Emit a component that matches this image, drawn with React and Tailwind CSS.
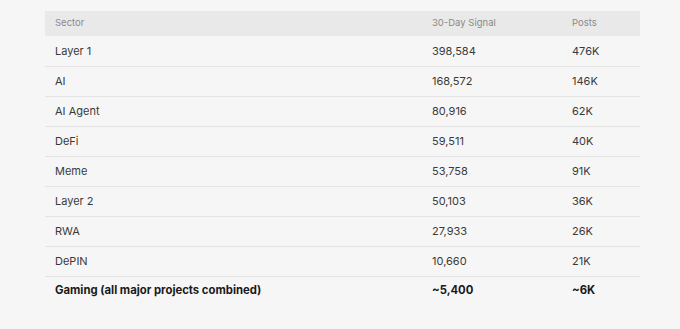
import React from "react";

const rows = [
  ["Layer 1", "398,584", "476K"],
  ["AI", "168,572", "146K"],
  ["AI Agent", "80,916", "62K"],
  ["DeFi", "59,511", "40K"],
  ["Meme", "53,758", "91K"],
  ["Layer 2", "50,103", "36K"],
  ["RWA", "27,933", "26K"],
  ["DePIN", "10,660", "21K"],
];

export default function App() {
  return (
    <div className="w-[680px] h-[329px] bg-[#f6f6f6] pt-[11px] px-[45px]" style={{ fontFamily: "Inter, 'Noto Sans', sans-serif" }}>
      <table className="w-[595px] border-collapse table-fixed">
        <colgroup>
          <col className="w-[387px]" />
          <col className="w-[140px]" />
          <col />
        </colgroup>
        <thead>
          <tr className="bg-[#e9e9e9] h-[25px]">
            <th className="text-left font-normal text-[9.5px] text-[#8a8a8a] pl-[10px]">Sector</th>
            <th className="text-left font-normal text-[9.5px] text-[#8a8a8a]">30-Day Signal</th>
            <th className="text-left font-normal text-[9.5px] text-[#8a8a8a]">Posts</th>
          </tr>
        </thead>
        <tbody>
          {rows.map(([a, b, c]) => (
            <tr key={a} className="h-[30px] border-b border-[#e4e4e4] text-[11px] text-[#3a3a3a]">
              <td className="pl-[10px]">{a}</td>
              <td>{b}</td>
              <td>{c}</td>
            </tr>
          ))}
          <tr className="h-[29px] text-[11.3px] font-bold text-[#1a1a1a]">
            <td className="pl-[10px]">Gaming (all major projects combined)</td>
            <td>~5,400</td>
            <td>~6K</td>
          </tr>
        </tbody>
      </table>
    </div>
  );
}
